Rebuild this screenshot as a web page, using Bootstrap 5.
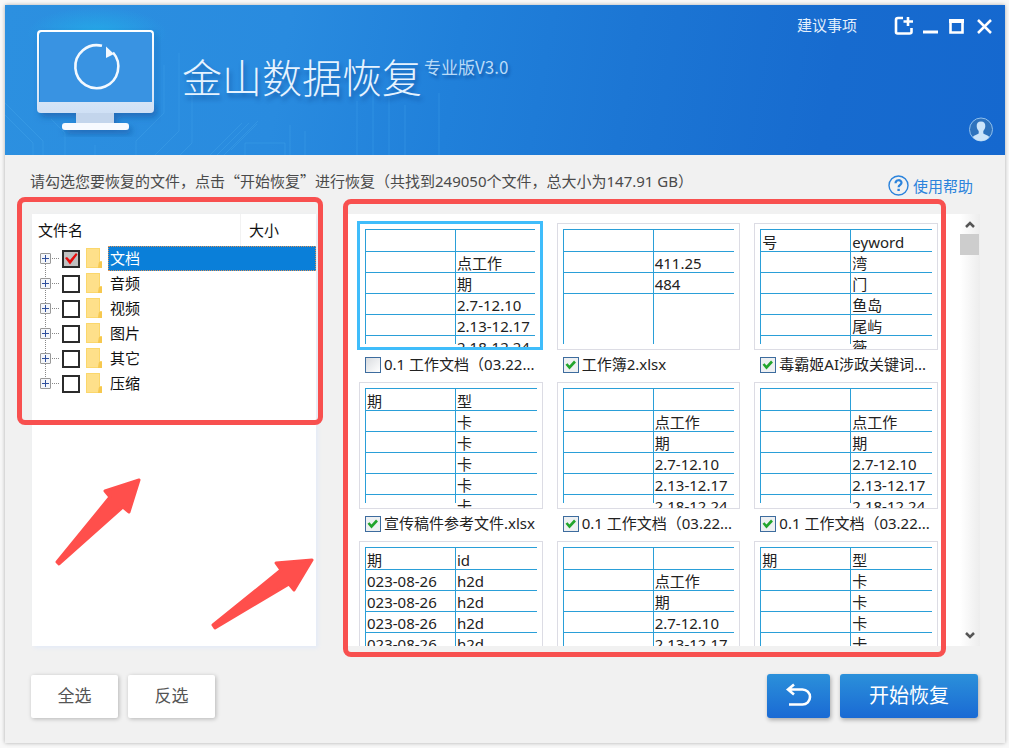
<!DOCTYPE html>
<html lang="zh-CN">
<head>
<meta charset="utf-8">
<meta name="viewport" content="width=device-width, initial-scale=1">
<title>金山数据恢复</title>
<link href="https://cdn.jsdelivr.net/npm/bootstrap@5.3.0/dist/css/bootstrap.min.css" rel="stylesheet">
<style>
body{background:#f8f8f8;font-family:"Noto Sans","Noto Sans CJK SC",sans-serif;font-size:15px;line-height:22px;color:#222}
.cjk{font-family:"Noto Sans CJK SC",sans-serif}
.latin{font-family:"Noto Sans",sans-serif}
.shell{padding:5px 4px 5px 5px}
.win{background:#f1f1f1;box-shadow:0 0 4px rgba(0,0,0,.3);min-height:0}
.banner{height:150px;background:linear-gradient(100deg,#2c90e0 0%,#298bdf 28%,#2080da 45%,#1c76d4 62%,#176bcf 82%,#1568cf 100%)}
.circuit{position:absolute;left:0;bottom:0;width:480px;height:150px}
.logo{width:128px;height:110px;margin:22px 0 0 28px;flex:none}
.brand{font-size:40px;line-height:50px;font-weight:300;margin:46px 0 0 21px;color:#e6f3ff;text-shadow:2px 4px 4px rgba(0,40,110,.4)}
.edition{font-size:17px;line-height:24px;font-weight:400;margin:50px 0 0 2px;color:#b9dbf8;text-shadow:2px 3px 3px rgba(0,40,110,.4)}
.winbar{margin:9px 8px 0 auto}
.winbar a{color:#e4f0fc;margin-right:34px}
.icon-btn{background:none;border:0;padding:0;line-height:0;display:block}
.user{position:absolute;right:11px;top:112px}
.notes{height:59px;padding:15px 32px 0 25px;color:#4a4a4a}
.helper{height:31px;color:#2b83dc}
.workarea{padding:0 25px 0 27px;gap:30px;min-height:0}
.treepane{flex:0 0 284px;background:#fff;box-shadow:2px 2px 4px #e4ebf7;color:#111}
.treehead{height:32px;padding:0 6px}
.treehead .size-col{width:76px;padding-left:8px;border-left:1px solid #f2f2f2;margin-right:-6px}
.treerows{position:relative}
.treerows::before{content:"";position:absolute;left:13px;top:14px;height:125px;border-left:1px dotted #888}
.treerow{height:25px;padding-left:8px}
.plus{position:relative;width:11px;height:11px;padding:0;border:1px solid #999;border-radius:1px;background:#f4f6fa;flex:none}
.plus::before,.plus::after{content:"";position:absolute;background:#2f4f9d}
.plus::before{left:1px;right:1px;top:4px;height:1px}
.plus::after{top:1px;bottom:1px;left:4px;width:1px}
.dots{width:7px;border-top:1px dotted #888;margin:0 3px 0 1px;flex:none}
.tickbig{appearance:none;width:18px;height:18px;border:2px solid #2b2b2b;background:#fff;margin:0;flex:none}
.tickbig:checked{background:#c0c0c0 url("data:image/svg+xml,%3Csvg xmlns='http://www.w3.org/2000/svg' viewBox='0 0 14 14'%3E%3Cpath d='M1 6l2-1 3 3 6-7 1.500 1.500-7.500 10z' fill='%23e80b0b'/%3E%3C/svg%3E") center/14px}
.folder{margin:0 5px 0 5px;flex:none}
.treename{height:25px;padding-left:2px;line-height:24px}
.picked{background:#0a7fd9;color:#fff;outline:1px dotted #d9935a;outline-offset:-1px}
.pane{min-width:0;background:#fff}
.files{overflow:hidden;padding:9px 22px 0 13px}
.filegrid{display:grid;grid-template-columns:repeat(3,minmax(0,1fr));column-gap:14px;grid-auto-rows:159px}
.sheet{height:127px;border:1px solid #dcdce4;padding:5px;overflow:hidden;background:#fff}
.sheet.active{border:3px solid #3fbdfb;margin:-2px 0 0 -2px;height:129px}
.cells{width:100%;table-layout:fixed;border-collapse:separate;border-spacing:0}
.cells td{border-top:1px solid #2a9fd8;border-left:1px solid #2a9fd8;padding:0 0 0 1px}
.cells td:first-child{width:90px}
.cells div{height:20px;line-height:22px;white-space:nowrap}
.cells tr:first-child div{height:21px;line-height:24px}
.cells tr.stub div{height:8px}
.cells tr.tail div{height:50px}
.caption-row{height:30px}
.caption-row label{height:24px}
.tick{appearance:none;width:16px;height:16px;border:1px solid #3d6c9e;background:linear-gradient(135deg,#d9dce0,#fff);margin:0 3px 0 6px;flex:none}
.tick:checked{background:url("data:image/svg+xml,%3Csvg xmlns='http://www.w3.org/2000/svg' viewBox='0 0 14 14'%3E%3Cpath d='M2.500 6l3 3.500L11 3.500' fill='none' stroke='%2322a52c' stroke-width='2.600'/%3E%3C/svg%3E") center/14px,#eef0f2}
.scroller{width:20px;background:linear-gradient(90deg,#fff,#ededed);padding:6px 1px 6px 0}
.thumb{height:21px;margin-top:6px;background:#cdcdcd}
.marker{position:absolute;border:5px solid #f8504f;border-radius:8px;pointer-events:none}
.marker-tree{left:-15px;right:-7px;top:-17px;height:228px}
.marker-files{left:-3px;right:34px;top:-15px;bottom:-11px}
.arrows{position:absolute;left:0;top:0;overflow:visible;pointer-events:none}
.actions{padding:28px 27px 25px 26px;gap:10px}
.plain{width:87px;height:43px;padding:0;border:0;border-radius:2px;background:#fff;color:#555;font-size:17px;box-shadow:1px 1px 4px rgba(0,0,0,.25)}
.main-btn{height:44px;padding:0;border:0;border-radius:3px;background:linear-gradient(#2b90da,#1a6ad4);color:#fff;font-size:20px;font-weight:400;box-shadow:1px 2px 4px rgba(0,0,0,.3)}
.main-btn.back{width:63px}
.main-btn.go{width:138px}
</style>
</head>
<body>
<div class="shell vh-100 d-flex flex-column">
<div class="win flex-grow-1 d-flex flex-column">
  <header class="banner position-relative d-flex align-items-start flex-shrink-0">
    <svg class="circuit" viewBox="0 0 480 150" fill="none" aria-hidden="true">
      <defs><radialGradient id="glow"><stop offset="0" stop-color="#22b4ea" stop-opacity=".7"/><stop offset="1" stop-color="#22b4ea" stop-opacity="0"/></radialGradient></defs>
      <ellipse cx="92" cy="28" rx="70" ry="26" fill="url(#glow)"/>
      <g stroke="#49a9ec" stroke-opacity=".35">
        <path d="M0 98l38 38v14M0 110l28 28v12M60 150v-22l-14-14M131 150v-14l28-28V60M150 150l24-24V48M175 150l12-12V62M205 150l32-32M212 150l32-32M219 150l34-34M226 145l26-26M240 150v-12h40v12M90 150v-10M285 150v-30M300 150v-24M352 150V96M368 150V86M384 150V92M400 150V100M434 150V88"/>
      </g>
    </svg>
    <svg class="logo position-relative" viewBox="0 0 128 110" aria-hidden="true">
      <defs>
        <linearGradient id="frame" x1="0" y1="0" x2="0" y2="1"><stop offset="0" stop-color="#fff"/><stop offset="1" stop-color="#cfe0f5"/></linearGradient>
        <filter id="soft" x="-20%" y="-20%" width="150%" height="150%"><feDropShadow dx="3" dy="4" stdDeviation="3" flood-color="#0b4a94" flood-opacity=".5"/></filter>
      </defs>
      <g filter="url(#soft)">
        <path d="M43 83h38v14H43z" fill="#c3d5ec"/>
        <rect x="29" y="96" width="67" height="7" rx="3" fill="#f7faff"/>
        <path fill-rule="evenodd" fill="url(#frame)" d="M8 3h109q4 0 4 4v75q0 4-4 4H8q-4 0-4-4V7q0-4 4-4zM9 5q-3 0-3 3v67h113V8q0-3-3-3z"/>
      </g>
      <path d="M7 8q0-3 3-3h106q3 0 3 3v67H7z" fill="#3993e2"/>
      <path d="M69 18.800A21.500 21.500 0 1 0 80 25.500" fill="none" stroke="#f3f9ff" stroke-width="2.600"/>
      <path d="M73 19.500l8 7.500-8 4z" fill="#f3f9ff"/>
    </svg>
    <h1 class="brand cjk position-relative mb-0 text-nowrap">金山数据恢复</h1>
    <span class="edition cjk position-relative text-nowrap">专业版V3.0</span>
    <nav class="winbar d-flex align-items-center">
      <a href="#" class="text-decoration-none text-nowrap">建议事项</a>
      <div class="d-flex gap-1">
      <button class="icon-btn" aria-label="分享"><svg width="24" height="22" fill="none" stroke="#fff" stroke-width="2.600"><path d="M12 4H7q-2 0-2 2v12q0 1.500 1.500 1.500h12q2 0 2-1.500v-4M17 3v9M12.500 7.500H22"/></svg></button>
      <button class="icon-btn" aria-label="最小化"><svg width="22" height="22" stroke="#fff" stroke-width="3"><path d="M4 18h15"/></svg></button>
      <button class="icon-btn" aria-label="最大化"><svg width="24" height="22" fill="none" stroke="#fff"><path d="M4 7h15" stroke-width="4"/><path d="M5.500 6v12.500h12V6" stroke-width="2.600"/></svg></button>
      <button class="icon-btn" aria-label="关闭"><svg width="24" height="22" stroke="#fff" stroke-width="2.500"><path d="M5 6l13 13M18 6L5 19"/></svg></button>
      </div>
    </nav>
    <button class="icon-btn user" aria-label="用户"><svg width="26" height="26" viewBox="0 0 26 26"><circle cx="13" cy="12.500" r="11.500" fill="#2d72bd" stroke="#8fc0ef"/><path d="M13 4.500c3 0 4.500 2 4.300 4.800-.1 2-1 3.600-2 4.700v2.500c1.500 1.300 4.500 1.500 6 3.500-2 2.500-5 4-8.300 4s-6.300-1.500-8.300-4c1.500-2 4.500-2.200 6-3.500V14c-1-1.100-1.900-2.700-2-4.700C8.500 6.500 10 4.500 13 4.500z" fill="#cbe4fa"/></svg></button>
  </header>

  <div class="notes d-flex justify-content-between align-items-start flex-shrink-0">
    <span class="cjk">请勾选您要恢复的文件，点击“开始恢复”进行恢复（共找到<span class="latin">249050</span>个文件，总大小为<span class="latin">147.91 GB</span>）</span>
    <a href="#" class="helper d-flex align-items-center text-decoration-none text-nowrap">
      <svg width="21" height="21" viewBox="0 0 21 21" class="me-1" fill="none" stroke="#2b83dc" aria-hidden="true"><circle cx="10.500" cy="10.500" r="9.500" stroke-width="1.400"/><path d="M7.500 8.300c0-4 6-4 6-.6 0 2-2.900 2.200-2.900 4.500" stroke-width="2.200"/><path d="M10.600 13.800V16" stroke-width="2.400"/></svg>使用帮助</a>
  </div>

  <main class="workarea flex-grow-1 d-flex">
    <section class="treepane position-relative">
      <div class="treehead d-flex align-items-stretch justify-content-between">
        <span class="align-self-center">文件名</span><span class="size-col d-flex align-items-center">大小</span>
      </div>
      <div class="treerows" id="tree"></div>
      <div class="marker marker-tree"></div>
      <svg class="arrows" width="284" height="432" fill="#ff4f4c" stroke="#ff4f4c" stroke-width="3" stroke-linejoin="round" aria-hidden="true">
        <path d="M107 266L73 277l5 6L25 348l2 2 64-57 6 5z"/>
        <path d="M280 346l-36 3 5 7-68 55 2 3 74-44 5 6z"/>
      </svg>
    </section>
    <section class="pane position-relative flex-grow-1 d-flex">
      <div class="files flex-grow-1"><div class="filegrid" id="grid"></div></div>
      <div class="scroller d-flex flex-column flex-shrink-0">
        <button class="icon-btn mx-auto" aria-label="向上"><svg width="12" height="8" fill="none" stroke="#555" stroke-width="2.500"><path d="M2 7l4-4 4 4"/></svg></button>
        <div class="thumb"></div>
        <button class="icon-btn mx-auto mt-auto" aria-label="向下"><svg width="12" height="8" fill="none" stroke="#555" stroke-width="2.500"><path d="M2 1l4 4 4-4"/></svg></button>
      </div>
      <div class="marker marker-files"></div>
    </section>
  </main>

  <footer class="actions d-flex align-items-center flex-shrink-0">
    <button class="btn plain">全选</button>
    <button class="btn plain">反选</button>
    <button class="btn main-btn back ms-auto d-flex align-items-center justify-content-center" aria-label="返回"><svg width="28" height="26" fill="none" stroke="#fff" stroke-width="2.600"><path d="M9 1.500L3 6.500 9 11.500M3 6.500H17.500a6.500 6.500 0 0 1 0 15H4"/></svg></button>
    <button class="btn main-btn go">开始恢复</button>
  </footer>
</div>
</div>
<script src="https://cdn.jsdelivr.net/npm/bootstrap@5.3.0/dist/js/bootstrap.bundle.min.js"></script>
<script>
const folder = `<svg class="folder" width="18" height="21" viewBox="0 0 18 21" aria-hidden="true"><path d="M1 0h14v13h2v7H1z" fill="#fbd76c"/><path d="M2 1h12v13l-1 5H2z" fill="#fee08a"/><path d="M14 14h3v6h-4z" fill="#f6c84f"/></svg>`;
document.getElementById('tree').innerHTML = ['文档','音频','视频','图片','其它','压缩'].map((n, i) => `
  <div class="treerow d-flex align-items-center">
    <button class="plus" aria-label="展开${n}"></button><span class="dots"></span>
    <input class="tickbig" type="checkbox" id="t${i}" ${i ? '' : 'checked'}>${folder}
    <label class="treename flex-grow-1 ${i ? '' : 'picked'}" for="t${i}">${n}</label>
  </div>`).join('');

const plan = [['',''],['','点工作'],['','期'],['','2.7-12.10'],['','2.13-12.17'],['','2.18-12.24']];
const cards = [['期','型'],['','卡'],['','卡'],['','卡'],['','卡'],['','卡']];
const files = [
  ['0.1 工作文档（03.22...', plan, false],
  ['工作簿2.xlsx', [['',''],['','411.25'],['','484'],['','']], true],
  ['毒霸姬AI涉政关键词...', [['号','eyword'],['','湾'],['','门'],['','鱼岛'],['','尾屿'],['','薇']], true],
  ['宣传稿件参考文件.xlsx', cards, true],
  ['0.1 工作文档（03.22...', plan, true],
  ['0.1 工作文档（03.22...', plan, true],
  ['', [['期','id'],['023-08-26','h2d'],['023-08-26','h2d'],['023-08-26','h2d'],['023-08-26','h2d']], true],
  ['', plan.slice(0, 5), true],
  ['', cards.slice(0, 5), true]
];
document.getElementById('grid').innerHTML = files.map(([name, rows, on], i) => `
  <div>
    <div class="sheet ${i ? '' : 'active'}"><table class="cells">${rows.map((r, k) =>
      `<tr class="${k === 5 ? 'stub' : rows.length === 4 && k === 3 ? 'tail' : ''}"><td><div>${r[0]}</div></td><td><div>${r[1]}</div></td></tr>`).join('')}</table></div>
    ${name ? `<div class="caption-row d-flex align-items-center"><input class="tick" type="checkbox" id="f${i}" ${on ? 'checked' : ''}><label class="text-nowrap" for="f${i}">${name}</label></div>` : ''}
  </div>`).join('');
</script>
</body>
</html>
